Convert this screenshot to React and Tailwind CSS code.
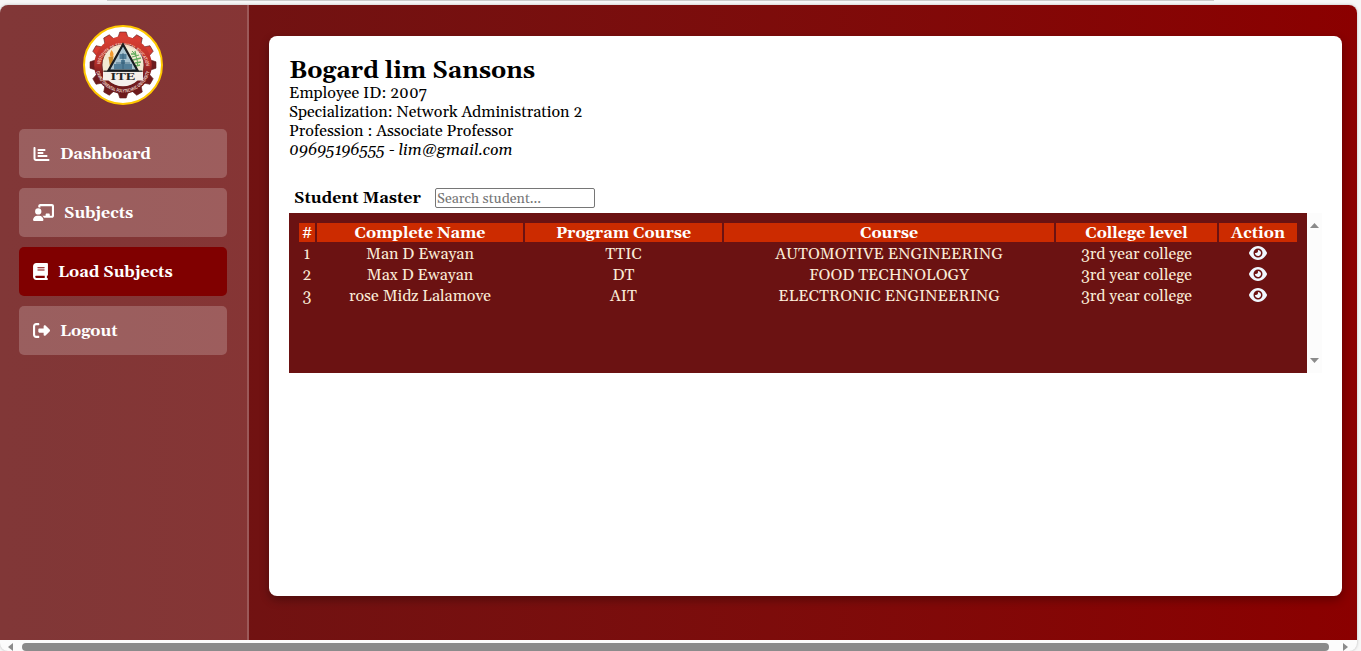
import { FaChartBar, FaChalkboardUser, FaBook, FaRightFromBracket, FaEye } from "react-icons/fa6";

const navItems = [
  { label: "Dashboard", Icon: FaChartBar, size: "w-[17px] h-4" },
  { label: "Subjects", Icon: FaChalkboardUser, size: "w-[21px] h-[17px]" },
  { label: "Load Subjects", Icon: FaBook, size: "w-[15px] h-[17px]", active: true },
  { label: "Logout", Icon: FaRightFromBracket, size: "w-[17px] h-[17px]" },
];

const columns = ["#", "Complete Name", "Program Course", "Course", "College level", "Action"];

const students = [
  ["1", "Man D Ewayan", "TTIC", "AUTOMOTIVE ENGINEERING", "3rd year college"],
  ["2", "Max D Ewayan", "DT", "FOOD TECHNOLOGY", "3rd year college"],
  ["3", "rose Midz Lalamove", "AIT", "ELECTRONIC ENGINEERING", "3rd year college"],
];

const teeth = Array.from({ length: 12 }, (_, i) => i * 30);

function Logo() {
  return (
    <svg viewBox="0 0 80 80" className="h-20 w-20 shrink-0">
      <defs>
        <linearGradient id="gear" gradientUnits="userSpaceOnUse" x1="0" y1="7" x2="0" y2="73">
          <stop offset="0" stopColor="#e04336" />
          <stop offset="0.45" stopColor="#b83029" />
          <stop offset="0.65" stopColor="#7a1c1e" />
          <stop offset="1" stopColor="#64191b" />
        </linearGradient>
        <path id="arcTop" d="M16.5 42 A23.7 23.7 0 0 1 63.5 42" />
        <path id="arcBottom" d="M12.8 44 A27.5 27.5 0 0 0 67.2 44" />
      </defs>
      <circle cx="40" cy="40" r="39" fill="#fff" stroke="#ffc800" strokeWidth="2" />
      {teeth.map((a) => (
        <path
          key={a}
          d="M34.8 13 L36.8 7 H43.2 L45.2 13 Z"
          fill={a > 80 && a < 280 ? "#6e1b1d" : "#d83d32"}
          stroke="#5e2020"
          strokeWidth="0.6"
          transform={`rotate(${a} 40 40)`}
        />
      ))}
      <circle cx="40" cy="40" r="28.8" fill="url(#gear)" />
      <circle cx="40" cy="40" r="21" fill="#f3ead2" stroke="#5e2020" strokeWidth="0.8" />
      <path d="M20 47 H60 V55.5 H54.5 A21 21 0 0 1 25.5 55.5 H20 Z" fill="#f4eeea" />
      <text fontSize="4.8" fontWeight="bold" fill="#f3c9bd" fontFamily="Liberation Sans, sans-serif">
        <textPath href="#arcTop" textLength="64" lengthAdjust="spacingAndGlyphs" startOffset="3">
          INSTITUTE OF TECHNICAL EDUCATION
        </textPath>
      </text>
      <text fontSize="4.8" fontWeight="bold" fill="#f1dcd4" fontFamily="Liberation Sans, sans-serif">
        <textPath href="#arcBottom" textLength="72" lengthAdjust="spacingAndGlyphs" startOffset="3">
          DAVAO ORIENTAL POLYTECHNIC UNIVERSITY
        </textPath>
      </text>
      <path d="M25.5 32 L30.5 31 L29 42 H27 Z" fill="#c98a2c" />
      <path d="M28.5 25 Q32 29 29.5 32 Q24.5 32 28.5 25Z" fill="#f29a2e" />
      <path d="M49 26 Q55 31 54.5 41" fill="none" stroke="#5fa557" strokeWidth="1" />
      <path d="M48 29h5M49 32l7-2M50 35l8-2M52 38l6-1M53 41l4-1M52 26l1 5" stroke="#67ae5f" strokeWidth="1.3" />
      <path d="M40 19.5 L54.5 45.5 H25.5 Z" fill="#a9c3cf" stroke="#171b20" strokeWidth="2.2" />
      <path d="M36.5 29h7v5h-7zM31 39h7v5h-7zM42 39h7v5h-7zM38 35h4v9h-4z" fill="#527e98" />
      <path d="M33 38h14M40 28v16" stroke="#335c73" strokeWidth="0.8" />
      <rect x="21" y="45.6" width="38" height="1.2" fill="#171b20" />
      <text x="27.5" y="55" fontSize="10" fontWeight="bold" textLength="25" lengthAdjust="spacingAndGlyphs" fill="#222" fontFamily="Liberation Serif, serif">
        ITE
      </text>
    </svg>
  );
}

function Arrow({ points, className }) {
  return (
    <svg className={className} viewBox="0 0 10 10" preserveAspectRatio="none">
      <polygon points={points} fill="#8b8b8b" />
    </svg>
  );
}

export default function App() {
  return (
    <div className="flex h-[651px] w-full flex-col overflow-hidden bg-[#f7f7f7] font-[Georgia,Gelasio,'Liberation_Serif',serif] text-base leading-[19px] text-black">
      <div className="flex h-[5px] shrink-0 items-start">
        <div className="ml-[107px] h-px w-[1107px] bg-[#cccccc]" />
      </div>
      <div className="flex h-[646px] w-[1357px] flex-col overflow-hidden rounded-lg bg-[#fcfcfc] shadow-[0_0_3px_rgba(0,0,0,0.25)]">
        <div className="flex h-[635px] shrink-0 bg-linear-to-r from-[#6b1414] to-[#8b0000]">
          <aside className="flex w-[249px] shrink-0 flex-col items-center border-r-2 border-white/30 bg-white/15 bg-clip-padding pt-5 pr-px">
            <Logo />
            <nav className="mt-6 flex w-52 flex-col gap-2.5">
              {navItems.map(({ label, Icon, size, active }) => (
                <a
                  key={label}
                  className={`flex h-[49px] items-center gap-2.5 rounded-[5px] pl-3.5 font-bold text-white ${active ? "bg-[#800000]" : "bg-white/20"}`}
                >
                  <Icon className={`shrink-0 ${size}`} />
                  <span className="pt-0.5">{label}</span>
                </a>
              ))}
            </nav>
          </aside>
          <main className="mt-[31px] ml-5 h-[560px] w-[1073px] rounded-lg bg-white px-5 pt-[21px] shadow-[0_4px_10px_rgba(0,0,0,0.3)]">
            <h2 className="h-[27px] text-2xl leading-[28px] font-bold">Bogard lim Sansons</h2>
            <p>Employee ID: 2007</p>
            <p>Specialization: Network Administration 2</p>
            <p>Profession : Associate Professor</p>
            <p className="italic">09695196555 - lim@gmail.com</p>
            <div className="mt-7 flex h-5 items-center pl-[5px]">
              <strong className="w-[141px]">Student Master</strong>
              <input
                placeholder="Search student..."
                className="h-5 w-40 rounded-[2px] border border-[#767676] bg-white px-px pt-px text-[14.1px] placeholder:text-[#757575]"
              />
            </div>
            <div className="mt-[5px] flex h-40">
              <div className="w-[1018px] bg-[#6b1212] p-2.5">
                <div className="grid grid-cols-[16px_206px_197px_330px_161px_78px] gap-0.5 text-center leading-[21px] text-[#faebd7]">
                  {columns.map((c) => (
                    <div key={c} className="h-[19px] bg-[#cc2b00] font-bold text-white">
                      {c}
                    </div>
                  ))}
                  {students.map((row) => [
                    ...row.map((cell, i) => (
                      <div key={row[0] + i} className="h-[19px] whitespace-nowrap">
                        {cell}
                      </div>
                    )),
                    <div key={row[0] + "view"} className="flex h-[19px] justify-center pt-px">
                      <FaEye className="h-4 w-[18px] text-[#f0f8ff]" />
                    </div>,
                  ])}
                </div>
              </div>
              <div className="flex w-[15px] flex-col items-center justify-between bg-[#fcfcfc] pt-[10px] pb-[10px]">
                <Arrow points="5,0 10,10 0,10" className="h-[5px] w-[9px]" />
                <Arrow points="0,0 10,0 5,10" className="h-[5px] w-[9px]" />
              </div>
            </div>
          </main>
        </div>
        <div className="flex h-[11px] items-start overflow-hidden pt-[3px] pl-2">
          <Arrow points="10,0 10,10 0,5" className="h-2 w-[5px] shrink-0" />
          <div className="ml-[9px] h-2 w-[1307px] shrink-0 rounded-[4px] bg-[#8b8b8b]" />
          <Arrow points="0,0 10,5 0,10" className="ml-[14px] h-2 w-[5px] shrink-0" />
        </div>
      </div>
    </div>
  );
}
